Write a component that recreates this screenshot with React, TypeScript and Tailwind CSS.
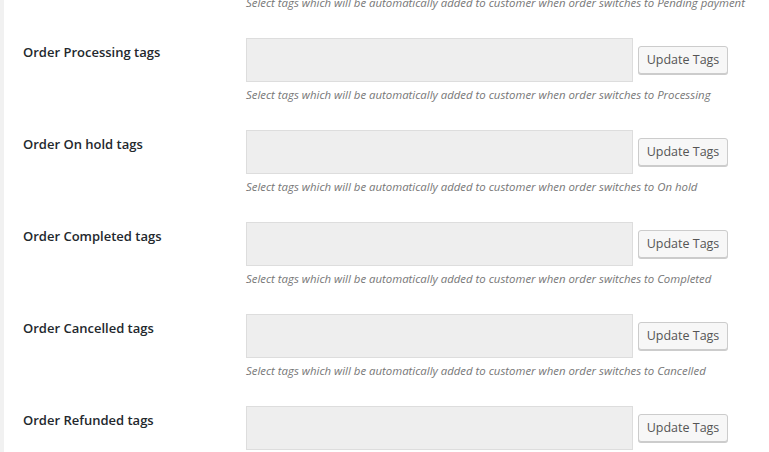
const statuses = [
  { label: "Order Pending payment tags", status: "Pending payment" },
  { label: "Order Processing tags", status: "Processing" },
  { label: "Order On hold tags", status: "On hold" },
  { label: "Order Completed tags", status: "Completed" },
  { label: "Order Cancelled tags", status: "Cancelled" },
  { label: "Order Refunded tags", status: "Refunded" },
];

export default function App() {
  return (
    <div className="flex h-[452px] w-[769px] overflow-hidden bg-white font-['Open_Sans',sans-serif]">
      <div className="w-[4px] shrink-0 bg-[#f1f1f1]" />
      <div className="-mt-[54px] flex flex-col pl-[19px]">
        {statuses.map((s) => (
          <div key={s.status} className="flex h-[92px] shrink-0">
            <div className="w-[223px] shrink-0 pt-[4px] text-[13px] leading-5 font-semibold text-[#23282d]">
              {s.label}
            </div>
            <div className="flex flex-col">
              <div className="flex items-start">
                <div className="h-[44px] w-[387px] border border-[#ddd] bg-[#eee]" />
                <button className="ml-[5px] mt-[8px] h-[28px] w-[90px] rounded-[3px] border border-[#ccc] bg-[#f7f7f7] text-[12.5px] text-[#555] shadow-[0_1px_0_#ccc]">
                  Update Tags
                </button>
              </div>
              <p className="mt-[4px] text-[11.4px] leading-[18px] italic text-[#777]">
                Select tags which will be automatically added to customer when order switches to {s.status}
              </p>
            </div>
          </div>
        ))}
      </div>
    </div>
  );
}
